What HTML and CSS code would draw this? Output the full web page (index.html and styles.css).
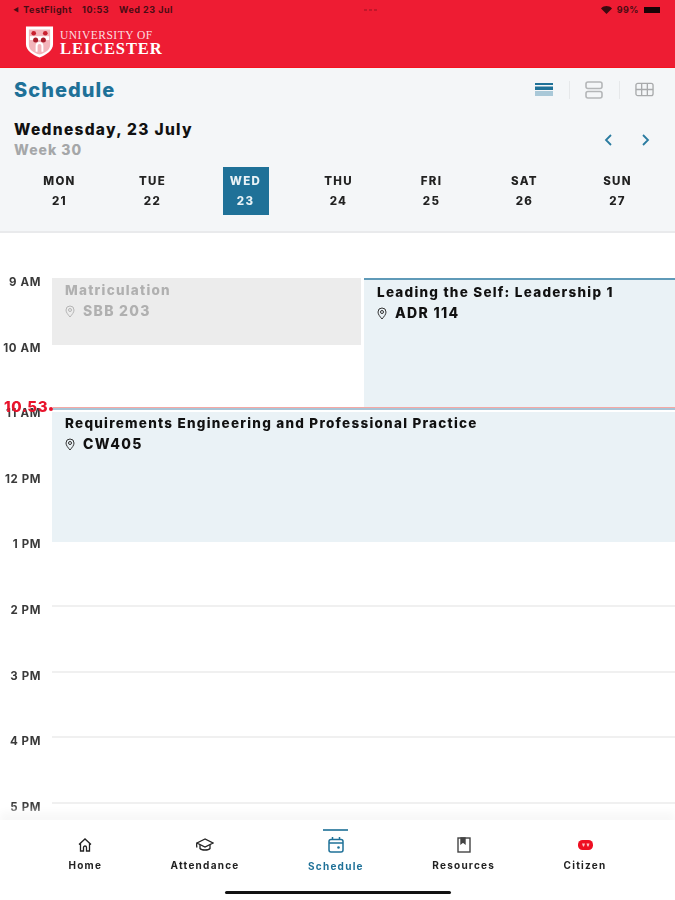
FILE: index.html
```html
<!DOCTYPE html>
<html lang="en">
<head>
    <meta charset="UTF-8">
    <meta name="viewport" content="width=device-width, initial-scale=1.0">
    <title>Schedule</title>
    <link rel="stylesheet" href="styles.css">
</head>
<body>
    <div class="app">
        <header class="brand">
            <div class="status">
                <div class="status-left">
                    <span class="back">&#9664;</span><span>TestFlight</span><span>10:53</span><span>Wed 23 Jul</span>
                </div>
                <div class="dots"><i></i><i></i><i></i></div>
                <div class="status-right">
                    <svg width="11" height="8" viewBox="0 0 11 8"><path d="M5.5 8 0 2.400C3.200-.8 7.800-.8 11 2.400z" fill="#3a0a10"/></svg>
                    <span>99%</span>
                    <span class="battery"></span>
                </div>
            </div>
            <div class="logo">
                <svg width="29" height="34" viewBox="0 0 30 34">
                    <path d="M1 1h28v18c0 7-7 11-14 14C8 30 1 26 1 19z" fill="#fff"/>
                    <path d="M4 4h22v16c0 5-5 8-11 10C9 28 4 25 4 20z" fill="#f3b5bb"/>
                    <path d="M5 11h20v4H5z" fill="#fff"/>
                    <circle cx="9" cy="8" r="2.400" fill="#c8202f"/>
                    <circle cx="21" cy="8" r="2.400" fill="#c8202f"/>
                    <circle cx="11" cy="15" r="2.600" fill="#a81c2a"/>
                    <circle cx="19" cy="15" r="2.600" fill="#a81c2a"/>
                    <path d="M11 27v-6a4 4 0 0 1 8 0v6h-2v-6a2 2 0 0 0-4 0v6z" fill="#fff"/>
                </svg>
                <div class="logo-text">
                    <div class="logo-small">UNIVERSITY OF</div>
                    <div class="logo-big">LEICESTER</div>
                </div>
            </div>
        </header>

        <section class="panel">
            <div class="title-row">
                <h1>Schedule</h1>
                <div class="views">
                    <svg width="18" height="14" viewBox="0 0 18 14"><rect y="0" width="18" height="2" fill="#1f7198"/><rect y="3.500" width="18" height="3.500" fill="#1f7198"/><rect y="8" width="18" height="5" fill="#a9c8d8"/></svg>
                    <span class="sep"></span>
                    <svg width="18" height="18" viewBox="0 0 18 18" fill="none" stroke="#b4b6b8" stroke-width="1.600"><rect x="1" y="1" width="16" height="6.500" rx="2"/><rect x="1" y="10.500" width="16" height="6.500" rx="2"/></svg>
                    <span class="sep"></span>
                    <svg width="19" height="15" viewBox="0 0 20 15" fill="none" stroke="#a8aaac" stroke-width="1.400"><rect x="1" y="1" width="18" height="13" rx="2"/><path d="M7 1v13M13 1v13M1 7.500h18"/></svg>
                </div>
            </div>
            <div class="date-row">
                <div>
                    <div class="date">Wednesday, 23 July</div>
                    <div class="week">Week 30</div>
                </div>
                <div class="arrows">
                    <svg width="9" height="12" viewBox="0 0 9 12" fill="none" stroke="#2a7ba0" stroke-width="1.800"><path d="M7 1 2 6l5 5"/></svg>
                    <svg width="9" height="12" viewBox="0 0 9 12" fill="none" stroke="#2a7ba0" stroke-width="1.800"><path d="m2 1 5 5-5 5"/></svg>
                </div>
            </div>
            <div class="days">
                <div class="day"><span>MON</span><span>21</span></div>
                <div class="day"><span>TUE</span><span>22</span></div>
                <div class="day on"><span>WED</span><span>23</span></div>
                <div class="day"><span>THU</span><span>24</span></div>
                <div class="day"><span>FRI</span><span>25</span></div>
                <div class="day"><span>SAT</span><span>26</span></div>
                <div class="day"><span>SUN</span><span>27</span></div>
            </div>
        </section>

        <main class="timeline">
            <div class="grid">
                <div class="hour h9">9 AM</div>
                <div class="hour h10">10 AM</div>
                <div class="hour h11">11 AM</div>
                <div class="hour h12">12 PM</div>
                <div class="hour h13">1 PM</div>
                <div class="hour h14">2 PM</div>
                <div class="hour h15">3 PM</div>
                <div class="hour h16">4 PM</div>
                <div class="hour h17">5 PM</div>

                <div class="line h14"></div>
                <div class="line h15"></div>
                <div class="line h16"></div>
                <div class="line h17"></div>

                <div class="event past">
                    <div class="ev-title">Matriculation</div>
                    <div class="ev-room">
                        <svg width="10" height="13" viewBox="0 0 10 13" fill="none" stroke="#b5b5b5" stroke-width="1"><path d="M5 12C3 9.500 1 7.500 1 5a4 4 0 0 1 8 0c0 2.500-2 4.500-4 7z"/><circle cx="5" cy="5" r="1.500"/></svg>
                        <span>SBB 203</span>
                    </div>
                </div>
                <div class="event lead">
                    <div class="ev-title">Leading the Self: Leadership 1</div>
                    <div class="ev-room">
                        <svg width="10" height="13" viewBox="0 0 10 13" fill="none" stroke="#333" stroke-width="1"><path d="M5 12C3 9.500 1 7.500 1 5a4 4 0 0 1 8 0c0 2.500-2 4.500-4 7z"/><circle cx="5" cy="5" r="1.500"/></svg>
                        <span>ADR 114</span>
                    </div>
                </div>
                <div class="event req">
                    <div class="ev-title">Requirements Engineering and Professional Practice</div>
                    <div class="ev-room">
                        <svg width="10" height="13" viewBox="0 0 10 13" fill="none" stroke="#333" stroke-width="1"><path d="M5 12C3 9.500 1 7.500 1 5a4 4 0 0 1 8 0c0 2.500-2 4.500-4 7z"/><circle cx="5" cy="5" r="1.500"/></svg>
                        <span>CW405</span>
                    </div>
                </div>

                <div class="now"><span class="now-time">10.53</span><span class="now-dot"></span><span class="now-line"></span></div>
            </div>
        </main>

        <nav class="tabs">
            <div class="tab">
                <svg width="14" height="14" viewBox="0 0 14 14" fill="none" stroke="#222" stroke-width="1.300"><path d="M1 6.500 7 1l6 5.500M2.500 5.500V13h3V9.500a1.500 1.500 0 0 1 3 0V13h3V5.500"/></svg>
                <span>Home</span>
            </div>
            <div class="tab">
                <svg width="18" height="14" viewBox="0 0 18 14" fill="none" stroke="#222" stroke-width="1.300"><path d="M9 1 1 5l8 4 8-4z"/><path d="M4 7v3.500c1.500 2 8.500 2 10 0V7M1 5c-.5 1.500-.5 3 0 4.500"/></svg>
                <span>Attendance</span>
            </div>
            <div class="tab active">
                <svg width="16" height="16" viewBox="0 0 16 16" fill="none" stroke="#1f7198" stroke-width="1.500"><rect x="1" y="2.500" width="14" height="12.500" rx="2"/><path d="M1 6h14M4.500 0v3M11.500 0v3"/><circle cx="10.500" cy="10.500" r="1.300" fill="#1f7198" stroke="none"/></svg>
                <span>Schedule</span>
            </div>
            <div class="tab">
                <svg width="14" height="16" viewBox="0 0 14 16" fill="none" stroke="#444" stroke-width="1.400"><rect x="1" y="1" width="12" height="14"/><path d="M4 1h4v5.500L6 5 4 6.500z" fill="#444"/></svg>
                <span>Resources</span>
            </div>
            <div class="tab">
                <svg width="15" height="12" viewBox="0 0 15 12"><rect x="0" y="1" width="15" height="10" rx="4.500" fill="#ee0f22"/><path d="M4 4.500h3l-1 3H5zM8.500 4.500h3l-1 3h-1z" fill="#fff" opacity=".75"/></svg>
                <span>Citizen</span>
            </div>
        </nav>
        <div class="home-bar"><span></span></div>
    </div>
</body>
</html>
```

FILE: styles.css
```css
*{
    margin:0;
    padding:0;
    box-sizing:border-box;
}
body{
    font-family:Inter,"Liberation Sans",sans-serif;
    background:#fff;
    color:#111;
}
.app{
    width:675px;
    height:900px;
    display:flex;
    flex-direction:column;
    overflow:hidden;
    filter:blur(.35px);
}

/* red header */
.brand{
    height:68px;
    flex:none;
    background:#ee1c33;
    border-bottom:1px solid #f5141f;
    padding:0 13px;
}
.status{
    height:19px;
    display:flex;
    align-items:center;
    justify-content:space-between;
    font-size:9px;
    font-weight:700;
    letter-spacing:.5px;
    color:#4a0c14;
}
.status-left{
    width:200px;
    display:flex;
    gap:10px;
}
.back{
    font-size:6px;
    margin-right:-6px;
    line-height:11px;
}
.dots{
    display:flex;
    gap:2px;
    margin-right:72px;
}
.dots i{
    width:3px;
    height:2px;
    background:#c4162a;
}
.status-right{
    display:flex;
    align-items:center;
    gap:5px;
    padding-right:2px;
}
.battery{
    width:16px;
    height:6px;
    background:#1a0306;
}
.logo{
    display:flex;
    align-items:center;
    gap:6px;
    padding-left:12px;
    margin-top:6px;
}
.logo-text{
    font-family:"Liberation Serif",serif;
    color:#fbdfe1;
    line-height:1;
    padding-top:4px;
}
.logo-small{
    font-size:11.500px;
    letter-spacing:.5px;
    height:11px;
}
.logo-big{
    font-size:16.500px;
    letter-spacing:.9px;
    font-weight:700;
    color:#fff;
}

/* schedule panel */
.panel{
    height:165px;
    flex:none;
    background:#f4f6f8;
    border-bottom:2px solid #e9eaec;
    padding:8px 21px 0 14px;
}
.title-row{
    height:27px;
    display:flex;
    align-items:center;
    justify-content:space-between;
}
h1{
    font-size:20px;
    font-weight:800;
    letter-spacing:1.050px;
    color:#1f7198;
}
.views{
    display:flex;
    align-items:center;
    gap:15.500px;
}
.sep{
    width:1px;
    height:18px;
    background:#e6e8ea;
}
.date-row{
    margin-top:17px;
    display:flex;
    justify-content:space-between;
    align-items:center;
}
.date{
    font-size:15.500px;
    font-weight:800;
    letter-spacing:1.300px;
    line-height:20px;
}
.week{
    font-size:14px;
    font-weight:800;
    letter-spacing:1px;
    color:#a5a7a9;
    line-height:20px;
}
.arrows{
    display:flex;
    gap:28px;
    padding-right:4px;
    margin-top:-1px;
}
.days{
    margin:7px -8px 0 -1px;
    display:grid;
    grid-template-columns:repeat(7,93px);
}
.day{
    width:46px;
    height:48px;
    justify-self:center;
    display:flex;
    flex-direction:column;
    align-items:center;
    padding-top:7px;
    gap:5px;
    font-size:11.500px;
    font-weight:800;
    letter-spacing:1.300px;
    line-height:15px;
    color:#222;
}
.day.on{
    background:#1f7198;
    color:#e8f2f6;
}

/* time grid */
.timeline{
    flex:1;
    min-height:0;
    overflow:hidden;
    padding-top:45px;
}
.grid{
    position:relative;
    display:grid;
    grid-template-columns:52px 312px 311px;
    grid-template-rows:repeat(9,65.600px);
}
.h9{grid-row:1}
.h10{grid-row:2}
.h11{grid-row:3}
.h12{grid-row:4}
.h13{grid-row:5}
.h14{grid-row:6}
.h15{grid-row:7}
.h16{grid-row:8}
.h17{grid-row:9}
.hour{
    grid-column:1;
    margin-top:-3px;
    padding-right:11px;
    font-size:11.500px;
    font-weight:700;
    letter-spacing:.6px;
    color:#3a3a3a;
    text-align:right;
}
.line{
    grid-column:2 / 4;
    margin-top:-1px;
    border-top:2px solid #f0f0f0;
}
.event{
    padding:3px 13px;
}
.ev-title{
    font-size:13.500px;
    font-weight:800;
    letter-spacing:1.250px;
    line-height:18px;
}
.ev-room{
    display:flex;
    align-items:center;
    gap:8px;
    margin-top:3px;
    font-size:14px;
    font-weight:800;
    letter-spacing:1.300px;
    line-height:18px;
}
.past{
    grid-column:2;
    grid-row:1;
    background:#ececec;
    color:#b0b0b0;
    margin-right:3px;
    margin-bottom:-1px;
}
.lead{
    grid-column:3;
    grid-row:1 / 3;
    background:#eaf2f6;
    border-top:2px solid #5f9ab8;
    padding-top:3px;
}
.req{
    grid-column:2 / 4;
    grid-row:3 / 5;
    background:#eaf2f6;
    margin-top:3px;
    margin-bottom:-2px;
    padding-top:2px;
}
.now{
    position:absolute;
    left:0;
    right:0;
    top:129px;
    display:flex;
    align-items:center;
    height:3px;
}
.now-time{
    width:48px;
    margin-top:-4px;
    text-align:right;
    font-size:15px;
    font-weight:800;
    color:#e8142c;
    letter-spacing:.5px;
}
.now-dot{
    width:4px;
    height:4px;
    margin-left:1px;
    border-radius:50%;
    background:#e8142c;
}
.now-line{
    flex:1;
    height:3px;
    background:linear-gradient(#f5a9a5 50%,#a9c4d6 50%);
}

/* bottom tabs */
.tabs{
    height:71px;
    flex:none;
    background:#fff;
    display:flex;
    justify-content:space-evenly;
    box-shadow:0 -8px 8px #f8f8f8;
    position:relative;
}
.tab{
    display:flex;
    flex-direction:column;
    align-items:center;
    gap:6px;
    padding-top:17px;
    font-size:10px;
    font-weight:700;
    letter-spacing:1.250px;
    color:#222;
}
.tab svg{
    height:16px;
}
.tab.active{
    position:relative;
    color:#1f7198;
    gap:7px;
}
.tab.active::before{
    content:"";
    position:absolute;
    top:9px;
    width:25px;
    height:2px;
    background:#4a8cab;
}
.home-bar{
    height:9px;
    flex:none;
    display:flex;
    justify-content:center;
}
.home-bar span{
    width:226px;
    height:3px;
    border-radius:2px;
    background:#111;
}
```
